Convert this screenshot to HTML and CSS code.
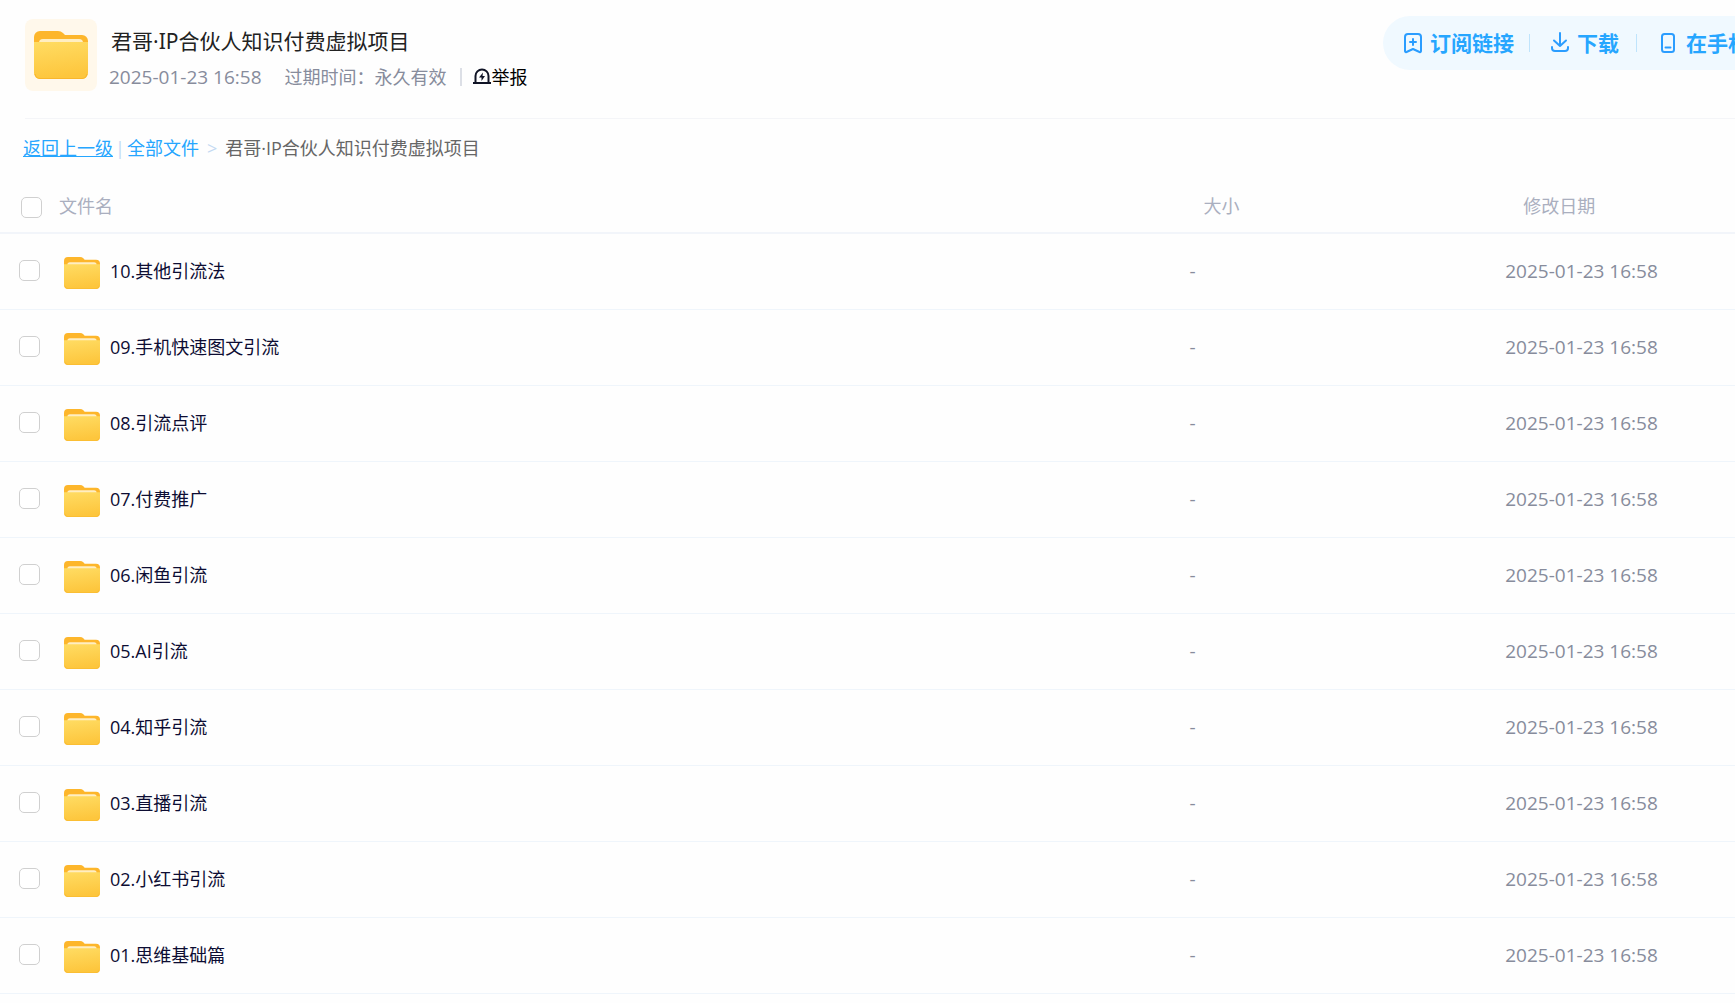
FILE: index.html
```
<!DOCTYPE html>
<html lang="zh-CN">
<head>
<meta charset="utf-8">
<title>君哥·IP合伙人知识付费虚拟项目</title>
<link rel="stylesheet" href="styles.css">
<script src="files.js" defer></script>
</head>
<body>
<svg class="defs" aria-hidden="true">
  <defs>
    <linearGradient id="front" x1="0" y1="0" x2="0.2" y2="1"><stop offset="0" stop-color="#ffdc63"/><stop offset="1" stop-color="#fdc63d"/></linearGradient>
    <symbol id="folder" viewBox="0 0 54 48" preserveAspectRatio="none">
      <path d="M0 14V6a6 6 0 0 1 6-6h18q3 0 5 2l2 2h17a6 6 0 0 1 6 6v8H0z" fill="#fdb62b"/>
      <path d="M5 16v-4q0-4 4-4h36q4 0 4 4v4z" fill="#ffeec2"/>
      <path d="M0 11h54v31a6 6 0 0 1-6 6H6a6 6 0 0 1-6-6z" fill="url(#front)"/>
      <path d="M1 43q1 4.500 5 4.500h42q4 0 5-4.500" fill="none" stroke="#f9b62c"/>
    </symbol>
  </defs>
</svg>
<header class="top">
  <div class="cover"><svg class="cover-icon" aria-hidden="true"><use href="#folder"/></svg></div>
  <div class="info">
    <h1 class="title">君哥·IP合伙人知识付费虚拟项目</h1>
    <div class="meta">
      <time class="date">2025-01-23 16:58</time>
      <span class="expire">过期时间：永久有效</span>
      <button class="report" type="button">
        <svg width="18" height="18" viewBox="0 0 18 18" fill="none" stroke="#101426" stroke-width="2" aria-hidden="true"><path d="M2.500 15V8a6.500 6.500 0 0 1 13 0v7M0 15h18"/><path d="M10 4.500L6 9.500H8.500V13L12 8H9.500z" fill="#101426" stroke="none"/></svg>举报</button>
    </div>
  </div>
  <div class="actions">
    <button class="action" type="button"><svg width="20" height="22" viewBox="0 0 20 22" aria-hidden="true"><path d="M2 5a3 3 0 0 1 3-3h10a3 3 0 0 1 3 3v14q0 1.500-1.500 1L10 17l-6.500 3Q2 20.500 2 19zM10 7v6M7 10h6"/></svg>订阅链接</button>
    <button class="action action-download" type="button"><svg width="20" height="22" viewBox="0 0 20 22" aria-hidden="true"><path d="M10 1v13M4 8.500L10 14l6-5.500M2 15v1a3 3 0 0 0 3 3h10a3 3 0 0 0 3-3v-1"/></svg>下载</button>
    <button class="action action-phone" type="button"><svg width="16" height="22" viewBox="0 0 16 22" aria-hidden="true"><rect x="2" y="2" width="12" height="18" rx="2.500"/><path d="M5.500 15.500h5"/></svg>在手机</button>
  </div>
</header>
<nav class="crumbs" aria-label="路径">
  <a class="back" href="#">返回上一级</a>
  <span class="bar">|</span>
  <a class="all" href="#">全部文件</a>
  <span class="arrow">&gt;</span>
  <span class="here">君哥·IP合伙人知识付费虚拟项目</span>
</nav>
<table class="files">
  <thead>
    <tr>
      <th class="col-check"><input class="check" type="checkbox" aria-label="全选"></th>
      <th class="col-name">文件名</th>
      <th class="col-size">大小</th>
      <th class="col-date">修改日期</th>
    </tr>
  </thead>
  <tbody id="rows"></tbody>
</table>
</body>
</html>
```
FILE: styles.css
```
* {
  box-sizing: border-box;
}

body {
  margin: 0;
  background: #fefefe;
  color: #0d0d33;
  font: 18px/24px "Open Sans", "Noto Sans CJK SC", sans-serif;
  overflow-x: hidden;
}

button {
  padding: 0;
  border: 0;
  background: none;
  font: inherit;
  white-space: nowrap;
  cursor: pointer;
}

.defs {
  position: absolute;
  width: 0;
  height: 0;
}

.top {
  display: flex;
  align-items: flex-start;
  height: 119px;
  margin-left: 25px;
  border-bottom: 1px solid #f4f5f8;
  overflow: hidden;
}

.cover {
  display: flex;
  align-items: center;
  justify-content: center;
  width: 72px;
  height: 72px;
  margin-top: 19px;
  border-radius: 8px;
  background: #fff8eb;
}

.cover-icon {
  width: 54px;
  height: 48px;
}

.info {
  flex: 1;
  padding: 27px 0 0 12px;
}

.title {
  margin: 0 0 10px 2px;
  color: #222;
  font-family: "Noto Sans", "Noto Sans CJK SC", sans-serif;
  font-size: 21px;
  line-height: 28px;
  font-weight: 400;
}

.meta {
  display: flex;
  align-items: center;
  color: #878c9c;
}

.date {
  margin-right: 23px;
  font-size: 19px;
}

.expire {
  padding-right: 13px;
}

.report {
  display: flex;
  align-items: center;
  gap: 1px;
  height: 18px;
  padding-left: 11px;
  border-left: 2px solid #dcdfe6;
  color: #000;
}

.actions {
  display: flex;
  flex: none;
  margin: 16px -54px 0 0;
  padding-left: 20px;
  border-radius: 27px 0 0 27px;
  background: #f0f9ff;
}

.action {
  display: flex;
  align-items: center;
  height: 54px;
  gap: 7px;
  color: #26a6ff;
  font-size: 21px;
  font-weight: 700;
}

.action svg {
  fill: none;
  stroke: #2b9dff;
  stroke-width: 2;
  stroke-linecap: round;
  stroke-linejoin: round;
}

.action + .action::before {
  content: "";
  width: 1px;
  height: 18px;
  margin: 0 13px 0 15px;
  background: #bfe4fc;
}

.action.action-phone {
  gap: 10px;
  padding-right: 40px;
}

.action.action-phone::before {
  margin-left: 17px;
}

.crumbs {
  display: flex;
  align-items: center;
  height: 58px;
  padding-left: 23px;
}

.crumbs a {
  color: #26a6ff;
}

.all {
  text-decoration: none;
}

.bar,
.arrow {
  margin: 0 2px;
  color: #c3d9f2;
}

.arrow {
  margin: 0 8px;
}

.here {
  color: #666;
}

.files {
  width: 100%;
  table-layout: fixed;
  border-collapse: separate;
  border-spacing: 0;
}

.files th,
.files td {
  padding: 0;
  text-align: left;
  vertical-align: middle;
}

.files th {
  height: 57px;
  padding-top: 3px;
  border-bottom: 2px solid #f2f5fa;
  color: #aaafbf;
  font-weight: 400;
}

.files td {
  height: 76px;
  padding-bottom: 2px;
  border-bottom: 1px solid #eff5fb;
}

.files .col-check {
  width: 59px;
  padding: 5px 0 0 21px;
}

.files .col-size {
  width: 18.2%;
  padding-left: 15px;
}

.files .col-date {
  width: 13.3%;
  padding-left: 19px;
}

.files .cell-check {
  padding-left: 19px;
}

.check {
  display: block;
  appearance: none;
  width: 21px;
  height: 21px;
  margin: 0;
  border: 1px solid #d0d0d0;
  border-radius: 5px;
  background: #fff;
}

.check:checked {
  background: #26a6ff;
}

.name {
  display: flex;
  align-items: center;
  gap: 10px;
  padding-left: 5px;
  color: #0d0d33;
  text-decoration: none;
}

.row-icon {
  width: 36px;
  height: 32px;
  margin-top: 4px;
}

.files .cell-size,
.files .cell-date {
  padding-left: 1px;
  color: #878c9c;
  font-size: 19px;
}
```
FILE: files.js
```
const names = [
  "10.其他引流法",
  "09.手机快速图文引流",
  "08.引流点评",
  "07.付费推广",
  "06.闲鱼引流",
  "05.AI引流",
  "04.知乎引流",
  "03.直播引流",
  "02.小红书引流",
  "01.思维基础篇",
];

document.getElementById("rows").innerHTML = names.map((name) => `
  <tr>
    <td class="cell-check"><input class="check" type="checkbox" aria-label="${name}"></td>
    <td><a class="name" href="#"><svg class="row-icon" aria-hidden="true"><use href="#folder"/></svg>${name}</a></td>
    <td class="cell-size">-</td>
    <td class="cell-date">2025-01-23 16:58</td>
  </tr>`).join("");
```
